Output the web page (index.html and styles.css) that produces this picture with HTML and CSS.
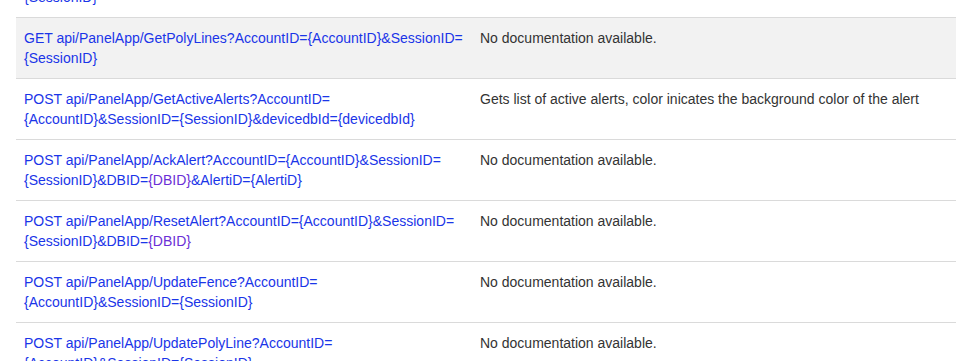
FILE: index.html
```html
<!DOCTYPE html>
<html>
<head>
<meta charset="utf-8">
<link rel="stylesheet" href="styles.css">
</head>
<body>
<div class="page">
  <table class="api">
    <tbody>
      <tr class="row">
        <td class="name"><a href="#">GET api/PanelApp/GetFences?AccountID={AccountID}&amp;SessionID=<br>{SessionID}</a></td>
        <td class="doc">No documentation available.</td>
      </tr>
      <tr class="row alt">
        <td class="name"><a href="#">GET api/PanelApp/GetPolyLines?AccountID={AccountID}&amp;SessionID=<br>{SessionID}</a></td>
        <td class="doc">No documentation available.</td>
      </tr>
      <tr class="row">
        <td class="name"><a href="#">POST api/PanelApp/GetActiveAlerts?AccountID=<br>{AccountID}&amp;SessionID={SessionID}&amp;devicedbId={devicedbId}</a></td>
        <td class="doc">Gets list of active alerts, color inicates the background color of the alert</td>
      </tr>
      <tr class="row">
        <td class="name"><a href="#">POST api/PanelApp/AckAlert?AccountID={AccountID}&amp;SessionID=<br>{SessionID}&amp;DBID=<span class="visited">{DBID}</span>&amp;AlertiD={AlertiD}</a></td>
        <td class="doc">No documentation available.</td>
      </tr>
      <tr class="row">
        <td class="name"><a href="#">POST api/PanelApp/ResetAlert?AccountID={AccountID}&amp;SessionID=<br>{SessionID}&amp;DBID=<span class="visited">{DBID}</span></a></td>
        <td class="doc">No documentation available.</td>
      </tr>
      <tr class="row">
        <td class="name"><a href="#">POST api/PanelApp/UpdateFence?AccountID=<br>{AccountID}&amp;SessionID={SessionID}</a></td>
        <td class="doc">No documentation available.</td>
      </tr>
      <tr class="row">
        <td class="name"><a href="#">POST api/PanelApp/UpdatePolyLine?AccountID=<br>{AccountID}&amp;SessionID={SessionID}</a></td>
        <td class="doc">No documentation available.</td>
      </tr>
    </tbody>
  </table>
</div>
</body>
</html>
```

FILE: styles.css
```css
html, body {
  margin: 0;
  padding: 0;
  background: #ffffff;
}
body {
  font-family: "Liberation Sans", Arial, sans-serif;
  font-size: 14px;
  line-height: 20px;
  color: #333333;
  overflow: hidden;
}
.page {
  padding-left: 16px;
  margin-top: -44px;
}
.api {
  border-collapse: collapse;
  width: 960px;
}
.row td {
  border-top: 1px solid #dadada;
  padding: 10px 8px;
  vertical-align: top;
  text-align: left;
}
.row.alt td {
  background: #f2f2f2;
}
.name {
  width: 440px;
}
.name a {
  color: #1a35e8;
  text-decoration: none;
}
.name a .visited {
  color: #6b2fd6;
}
.doc {
  color: #333333;
}
```
